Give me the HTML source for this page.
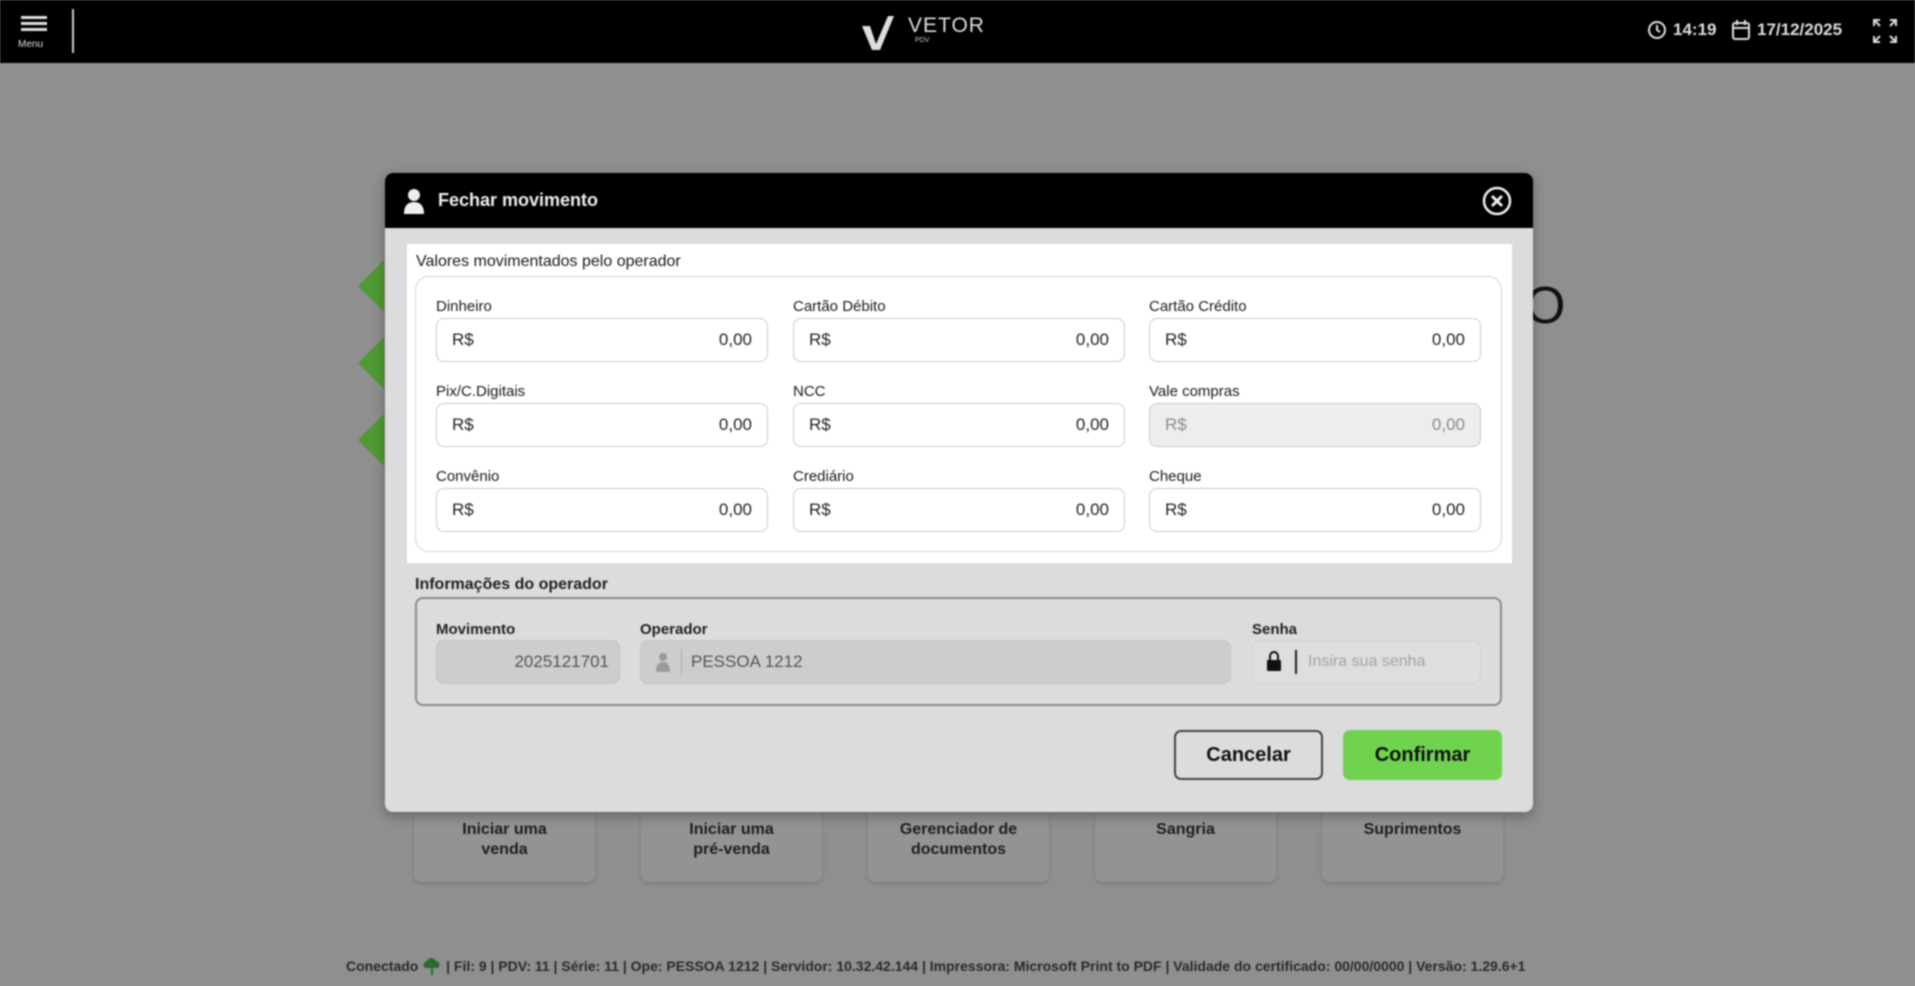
<!DOCTYPE html>
<html><head><meta charset="utf-8"><style>
*{box-sizing:border-box;margin:0;padding:0}
body{width:1915px;height:986px;overflow:hidden;background:#8f8f8f;font-family:"Liberation Sans",sans-serif;position:relative;filter:blur(0.7px)}
.hdr{position:absolute;left:0;top:0;width:1915px;height:63px;background:#000;color:#ddd}
.abs{position:absolute}
.card{position:absolute;top:806px;width:181px;height:76px;background:#939393;border-radius:8px;box-shadow:0 2px 4px rgba(0,0,0,.15);text-align:center;font-weight:bold;font-size:16px;color:#1e1e1e;padding-top:14px;line-height:20px}
.arrow{position:absolute;left:358px;width:0;height:0;border-top:26px solid transparent;border-bottom:26px solid transparent;border-right:26px solid #4f9a32}
.modal{position:absolute;left:385px;top:173px;width:1148px;height:639px;background:#dcdcdc;border-radius:8px;overflow:hidden;box-shadow:0 4px 12px rgba(0,0,0,.3)}
.mh{height:55px;background:#000;color:#eee;font-weight:bold;font-size:18px;line-height:55px;padding-left:53px;position:relative}
.lbl{position:absolute;font-size:15px;color:#1a1a1a}
.inp{position:absolute;width:332px;height:44px;border:1.5px solid #c9cbd1;border-radius:8px;background:#fff;font-size:17px;color:#222;line-height:41px;padding:0 15px}
.inp span{float:right}
.dis{background:#ededed;color:#8a8a8a}
.bl{position:absolute;font-size:15px;font-weight:bold;color:#222}
.gi{position:absolute;height:44px;background:#cdcdcd;border:1.5px solid #c4c4c4;border-radius:8px;font-size:17px;color:#555;line-height:41px}
</style></head><body>
<div class="hdr">
 <div class="abs" style="left:21px;top:16px;width:26px;height:3px;background:#ddd;box-shadow:0 6px 0 #ddd,0 12px 0 #ddd"></div>
 <div class="abs" style="left:18px;top:39px;font-size:10px">Menu</div>
 <div class="abs" style="left:72px;top:9px;width:2px;height:44px;background:#ccc"></div>
 <svg class="abs" style="left:860px;top:12px" width="40" height="40"><path d="M2 14 L12 38 L20 38 L34 4 L28 4 L16 32 L10 14 Z" fill="#ddd"/></svg>
 <div class="abs" style="left:908px;top:14px;font-size:21px;letter-spacing:1px;color:#ddd">VETOR</div>
 <div class="abs" style="left:915px;top:37px;font-size:7px;color:#ccc">PDV</div>
 <svg class="abs" style="left:1647px;top:20px" width="20" height="20"><circle cx="10" cy="10" r="8" fill="none" stroke="#ddd" stroke-width="2"/><path d="M10 5v5l3 2" stroke="#ddd" stroke-width="2" fill="none"/></svg>
 <div class="abs" style="left:1673px;top:20px;font-size:17px;font-weight:bold">14:19</div>
 <svg class="abs" style="left:1731px;top:19px" width="20" height="22"><rect x="2" y="4" width="16" height="16" rx="2" fill="none" stroke="#ddd" stroke-width="2"/><path d="M2 9h16M6 1v5M14 1v5" stroke="#ddd" stroke-width="2"/></svg>
 <div class="abs" style="left:1757px;top:20px;font-size:17px;font-weight:bold">17/12/2025</div>
 <svg class="abs" style="left:1872px;top:18px" width="26" height="26"><path d="M2 8V2h6M18 2h6v6M24 18v6h-6M8 24H2v-6M2 2l6 6M24 2l-6 6M24 24l-6-6M2 24l6-6" stroke="#ddd" stroke-width="2" fill="none"/></svg>
</div>
<div class="arrow" style="top:260px"></div>
<div class="arrow" style="top:337px"></div>
<div class="arrow" style="top:414px"></div>
<div class="abs" style="left:1525px;top:276px;font-size:52px;color:#111">O</div>
<div class="card" style="left:414px">Iniciar uma<br>venda</div>
<div class="card" style="left:641px">Iniciar uma<br>pré-venda</div>
<div class="card" style="left:868px">Gerenciador de<br>documentos</div>
<div class="card" style="left:1095px">Sangria</div>
<div class="card" style="left:1322px">Suprimentos</div>
<div class="abs" style="left:346px;top:957px;font-size:14px;font-weight:bold;color:#2a2a2a;white-space:nowrap">Conectado <svg width="20" height="18" style="vertical-align:-4px"><path d="M3 11a4 4 0 0 1 2-7a5 5 0 0 1 9 0a4 4 0 0 1 2 7Z" fill="#2a6b2a"/><path d="M10 10v8" stroke="#2a6b2a" stroke-width="2"/></svg> | Fil: 9 | PDV: 11 | Série: 11 | Ope: PESSOA 1212 | Servidor: 10.32.42.144 | Impressora: Microsoft Print to PDF | Validade do certificado: 00/00/0000 | Versão: 1.29.6+1</div>

<div class="modal">
 <div class="mh">
  <svg class="abs" style="left:18px;top:15px" width="22" height="26"><circle cx="11" cy="7" r="6" fill="#eee"/><path d="M1 26 Q1 14 11 14 Q21 14 21 26Z" fill="#eee"/></svg>
  Fechar movimento
  <svg class="abs" style="left:1097px;top:13px" width="30" height="30"><circle cx="15" cy="15" r="13" fill="none" stroke="#eee" stroke-width="2.5"/><path d="M10 10l10 10M20 10l-10 10" stroke="#eee" stroke-width="3"/></svg>
 </div>
 <div class="abs" style="left:22px;top:71px;width:1105px;height:319px;background:#fff"></div>
 <div class="abs" style="left:31px;top:80px;font-size:16px;color:#1a1a1a">Valores movimentados pelo operador</div>
 <div class="abs" style="left:30px;top:103px;width:1087px;height:276px;border:1.5px solid #d4d4d8;border-radius:14px"></div>
 <div class="lbl" style="left:51px;top:125px">Dinheiro</div>
 <div class="lbl" style="left:408px;top:125px">Cartão Débito</div>
 <div class="lbl" style="left:764px;top:125px">Cartão Crédito</div>
 <div class="inp" style="left:51px;top:145px">R$<span>0,00</span></div>
 <div class="inp" style="left:408px;top:145px">R$<span>0,00</span></div>
 <div class="inp" style="left:764px;top:145px">R$<span>0,00</span></div>
 <div class="lbl" style="left:51px;top:210px">Pix/C.Digitais</div>
 <div class="lbl" style="left:408px;top:210px">NCC</div>
 <div class="lbl" style="left:764px;top:210px">Vale compras</div>
 <div class="inp" style="left:51px;top:230px">R$<span>0,00</span></div>
 <div class="inp" style="left:408px;top:230px">R$<span>0,00</span></div>
 <div class="inp dis" style="left:764px;top:230px">R$<span>0,00</span></div>
 <div class="lbl" style="left:51px;top:295px">Convênio</div>
 <div class="lbl" style="left:408px;top:295px">Crediário</div>
 <div class="lbl" style="left:764px;top:295px">Cheque</div>
 <div class="inp" style="left:51px;top:315px">R$<span>0,00</span></div>
 <div class="inp" style="left:408px;top:315px">R$<span>0,00</span></div>
 <div class="inp" style="left:764px;top:315px">R$<span>0,00</span></div>

 <div class="bl" style="left:30px;top:403px;font-size:16px">Informações do operador</div>
 <div class="abs" style="left:30px;top:424px;width:1087px;height:109px;border:2px solid #8c8c8c;border-radius:8px"></div>
 <div class="bl" style="left:51px;top:448px">Movimento</div>
 <div class="bl" style="left:255px;top:448px">Operador</div>
 <div class="bl" style="left:867px;top:448px">Senha</div>
 <div class="gi" style="left:51px;top:467px;width:184px;text-align:right;padding-right:10px">2025121701</div>
 <div class="gi" style="left:255px;top:467px;width:591px;padding-left:50px">PESSOA 1212
  <svg class="abs" style="left:14px;top:11px" width="16" height="20"><circle cx="8" cy="5" r="4" fill="#9a9a9a"/><path d="M1 20 Q1 10 8 10 Q15 10 15 20Z" fill="#9a9a9a"/></svg>
  <div class="abs" style="left:40px;top:8px;width:1px;height:26px;background:#aaa"></div>
 </div>
 <div class="gi" style="left:867px;top:467px;width:229px;background:#dedede;border-color:#d0d0d0;color:#a4a4a4;font-size:16px;padding-left:55px">Insira sua senha
  <svg class="abs" style="left:13px;top:9px" width="16" height="22"><path d="M4 10V6a4 4 0 0 1 8 0v4" stroke="#111" stroke-width="2" fill="none"/><rect x="1" y="10" width="14" height="11" rx="1" fill="#111"/></svg>
  <div class="abs" style="left:42px;top:9px;width:2px;height:24px;background:#222"></div>
 </div>
 <div class="abs" style="left:789px;top:557px;width:149px;height:50px;border:2px solid #444;border-radius:7px;font-size:20px;font-weight:bold;color:#111;text-align:center;line-height:46px">Cancelar</div>
 <div class="abs" style="left:958px;top:557px;width:159px;height:50px;background:#6fd34f;border-radius:7px;font-size:20px;font-weight:bold;color:#111;text-align:center;line-height:50px">Confirmar</div>
</div>
</body></html>
